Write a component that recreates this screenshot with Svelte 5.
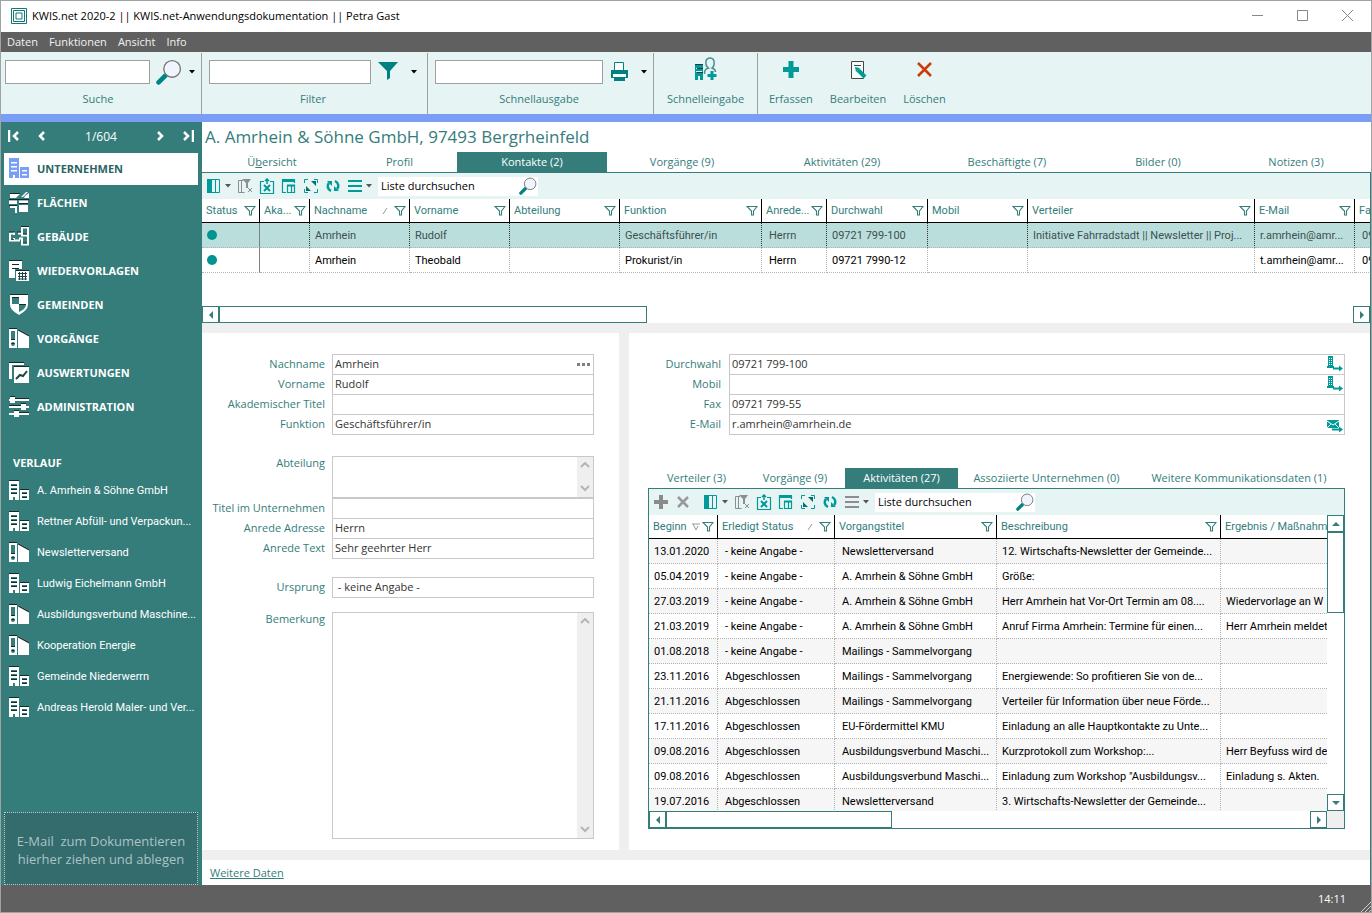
<script lang="ts">
  type Column = { label: string; width: number; filter?: boolean; sort?: 'asc' | 'desc'; inset?: boolean };

  const menu = ['Daten', 'Funktionen', 'Ansicht', 'Info'];

  const navigation = [
    { label: 'Unternehmen', icon: 'company', active: true },
    { label: 'Flächen', icon: 'areas' },
    { label: 'Gebäude', icon: 'building' },
    { label: 'Wiedervorlagen', icon: 'reminder' },
    { label: 'Gemeinden', icon: 'shield' },
    { label: 'Vorgänge', icon: 'folder' },
    { label: 'Auswertungen', icon: 'report' },
    { label: 'Administration', icon: 'sliders' }
  ];

  const history = [
    { label: 'A. Amrhein & Söhne GmbH', icon: 'company' },
    { label: 'Rettner Abfüll- und Verpackun...', icon: 'company' },
    { label: 'Newsletterversand', icon: 'folder' },
    { label: 'Ludwig Eichelmann GmbH', icon: 'company' },
    { label: 'Ausbildungsverbund Maschine...', icon: 'folder' },
    { label: 'Kooperation Energie', icon: 'folder' },
    { label: 'Gemeinde Niederwerrn', icon: 'company' },
    { label: 'Andreas Herold Maler- und Ver...', icon: 'company' }
  ];

  const tabs = ['Übersicht', 'Profil', 'Kontakte (2)', 'Vorgänge (9)', 'Aktivitäten (29)', 'Beschäftigte (7)', 'Bilder (0)', 'Notizen (3)'];
  const subTabs = ['Verteiler (3)', 'Vorgänge (9)', 'Aktivitäten (27)', 'Assoziierte Unternehmen (0)', 'Weitere Kommunikationsdaten (1)'];

  const contactColumns: Column[] = [
    { label: 'Status', width: 58, filter: true },
    { label: 'Aka...', width: 50, filter: true },
    { label: 'Nachname', width: 100, filter: true, sort: 'asc' },
    { label: 'Vorname', width: 100, filter: true },
    { label: 'Abteilung', width: 110, filter: true },
    { label: 'Funktion', width: 142, filter: true },
    { label: 'Anrede...', width: 65, filter: true, inset: true },
    { label: 'Durchwahl', width: 101, filter: true },
    { label: 'Mobil', width: 100, filter: true },
    { label: 'Verteiler', width: 227, filter: true },
    { label: 'E-Mail', width: 100, filter: true },
    { label: 'Fax', width: 100, filter: true, inset: true }
  ];

  const contacts = [
    ['', '', 'Amrhein', 'Rudolf', '', 'Geschäftsführer/in', 'Herrn', '09721 799-100', '', 'Initiative Fahrradstadt || Newsletter || Proj...', 'r.amrhein@amr...', '09721 799-55'],
    ['', '', 'Amrhein', 'Theobald', '', 'Prokurist/in', 'Herrn', '09721 7990-12', '', '', 't.amrhein@amr...', '09721 799-55']
  ];

  const activityColumns: Column[] = [
    { label: 'Beginn', width: 69, filter: true, sort: 'desc' },
    { label: 'Erledigt Status', width: 117, filter: true, sort: 'asc', inset: true },
    { label: 'Vorgangstitel', width: 162, filter: true, inset: true },
    { label: 'Beschreibung', width: 224, filter: true },
    { label: 'Ergebnis / Maßnahme', width: 160 }
  ];

  const activities = [
    ['13.01.2020', '- keine Angabe -', 'Newsletterversand', '12. Wirtschafts-Newsletter der Gemeinde...', ''],
    ['05.04.2019', '- keine Angabe -', 'A. Amrhein & Söhne GmbH', 'Größe:', ''],
    ['27.03.2019', '- keine Angabe -', 'A. Amrhein & Söhne GmbH', 'Herr Amrhein hat Vor-Ort Termin am 08....', 'Wiedervorlage an W'],
    ['21.03.2019', '- keine Angabe -', 'A. Amrhein & Söhne GmbH', 'Anruf Firma Amrhein: Termine für einen...', 'Herr Amrhein meldet'],
    ['01.08.2018', '- keine Angabe -', 'Mailings - Sammelvorgang', '', ''],
    ['23.11.2016', 'Abgeschlossen', 'Mailings - Sammelvorgang', 'Energiewende: So profitieren Sie von de...', ''],
    ['21.11.2016', 'Abgeschlossen', 'Mailings - Sammelvorgang', 'Verteiler für Information über neue Förde...', ''],
    ['17.11.2016', 'Abgeschlossen', 'EU-Fördermittel KMU', 'Einladung an alle Hauptkontakte zu Unte...', ''],
    ['09.08.2016', 'Abgeschlossen', 'Ausbildungsverbund Maschi...', 'Kurzprotokoll zum Workshop:...', 'Herr Beyfuss wird de'],
    ['09.08.2016', 'Abgeschlossen', 'Ausbildungsverbund Maschi...', 'Einladung zum Workshop "Ausbildungsv...', 'Einladung s. Akten.'],
    ['19.07.2016', 'Abgeschlossen', 'Newsletterversand', '3. Wirtschafts-Newsletter der Gemeinde...', '']
  ];

  const totalWidth = (columns: Column[]) => columns.reduce((sum, c) => sum + c.width, 0);
</script>

{#snippet lens(size: number)}
  <svg width={size} height={size} viewBox="0 0 25 25" aria-hidden="true">
    <path d="M2.500 22.500L9 16" stroke="#008484" stroke-width="4.500" stroke-linecap="round" />
    <circle cx="15.500" cy="9.500" r="8" fill="#f0f5fd" stroke="#777" stroke-width="1.300" />
  </svg>
{/snippet}

{#snippet caret()}
  <svg class="caret" width="6" height="4" viewBox="0 0 6 4" aria-hidden="true"><path d="M0 0h6L3 3.500z" /></svg>
{/snippet}

{#snippet navIcon(name: string)}
  <svg width="20" height="21" viewBox="0 0 20 21" fill="currentColor" aria-hidden="true">
    {#if name === 'company'}
      <path fill-rule="evenodd" d="M0 0h10v20H6v-3H4v3H0zM2 4v1.500h6V4zM2 8v1.500h6V8zM2 12v1.500h6V12zM11 9h9v11h-9zM13 12v1.500h5V12zM13 16v1.500h5V16z" />
      <path class="shade" d="M0 0h10v1H0zM11 9h9v1h-9zM2 5h6v1H2zM2 9h6v1H2zM2 13h6v1H2zM13 13h5v1h-5zM13 17h5v1h-5z" />
    {:else if name === 'areas'}
      <path d="M1 2h10l-4 4H1zM0 8h8v4H0zM1 14h7v7H6v-5H1zM10 7h9v4h-9zM10 13h9v7h-9zM12 5l5-5h2l-5 5zM16 4l4-3v5h-5z" />
      <path d="M9 7v14M0 8h20" stroke="#347d7b" stroke-width="1" />
      <path class="shade" d="M1 1h10v1H1zM0 7h20v1H0zM0 13h8v1H0zM10 11h9v1h-9z" />
    {:else if name === 'building'}
      <path d="M5 7.500H1v7h10M9 7.500h4M13 13.500v5h6v-17h-6v8h6M5 6v3M5 12v3M10 12.500h4" fill="none" stroke="currentColor" stroke-width="2" />
      <path class="shade" d="M12 0h8v1h-8zM0 5.500h6v1H0zM8 5.500h4v1H8zM14 7.500h4v1h-4zM14 16.500h4v1h-4zM2 13h3v.8H2z" />
    {:else if name === 'reminder'}
      <path fill-rule="evenodd" d="M0 0h13v9H6v9H0zM3 4v1h7V4zM3 8v1h7V8zM7 10h13v11H7z" />
      <path d="M9 13.500h9M9 16.500h9M9 19h9M10.500 12v8M13.500 12v8M16.500 12v8" stroke="#1d4443" stroke-width="1" />
      <path class="shade" d="M0 0h13v1H0zM3 4h7v1H3zM3 8h7v1H3zM7 10h13v1H7z" />
    {:else if name === 'shield'}
      <path d="M1 1h18v9c0 5-4 8-9 11C5 18 1 15 1 10z" />
      <path fill="#347d7b" d="M3 4h7v6h7c0 4-3 6-7 8v-8H3z" />
      <path class="shade" d="M1 0h18v1H1zM3 3h7v1H3zM10 10h7v1h-7z" />
    {:else if name === 'folder'}
      <path fill-rule="evenodd" d="M0 0h8v20H0zM2 3v9h4V3zM4 14a2 2 0 1 0 0 4a2 2 0 0 0 0-4zM9 1l11 6v13H9z" />
      <path class="shade" d="M0 0h8v1H0zM9 1l11 6v1.500L9 2.500zM2 11h4v1H2zM2.500 15h3v1h-3z" />
    {:else if name === 'report'}
      <path d="M0 0h15v3H3v14H0z" />
      <path d="M5 5h15v16H5z" />
      <path d="M7 17l4-4 3 1 4-5" fill="none" stroke="#1d4443" stroke-width="2" />
      <path class="shade" d="M0 0h15v1H0zM5 4h15v1H5z" />
    {:else if name === 'sliders'}
      <path d="M0 3h20v2H0zM0 10h20v2H0zM0 17h20v2H0zM1 1h5v6H1zM12 8h5v6h-5zM5 15h5v6H5z" />
      <path class="shade" d="M1 0h5v1H1zM6 2h14v1H6zM0 9h12v1H0zM12 7h5v1h-5zM5 14h5v1H5zM10 16h10v1H10z" />
    {/if}
  </svg>
{/snippet}

{#snippet funnel()}
  <svg width="12" height="10" viewBox="0 0 12 10" aria-hidden="true">
    <path d="M1 .5h10L7.500 5v4h-2V5z" fill="none" stroke="#347d7b" stroke-width="1.100" />
  </svg>
{/snippet}

{#snippet gridToolbar(id: string, editable: boolean)}
  <div class="grid-toolbar">
    {#if editable}
      <button aria-label="Hinzufügen" class="edit"><svg width="16" height="16" viewBox="0 0 16 16"><path d="M8 1v14M1 8h14" stroke="#8a8a8a" stroke-width="4" /></svg></button>
      <button aria-label="Entfernen" class="edit last"><svg width="16" height="16" viewBox="0 0 16 16"><path d="M3 3l10 10M13 3L3 13" stroke="#999" stroke-width="2.500" /></svg></button>
    {/if}
    <button class="split" aria-label="Spalten">
      <svg width="16" height="16" viewBox="0 0 16 16"><path d="M1.500 1.500h12v13h-12zM9.500 2v12" fill="#e6f4f4" stroke="#009a98" /><path d="M1 1h5v14H1z" fill="#009a98" /></svg>
      {@render caret()}
    </button>
    <button aria-label="Filter entfernen">
      <svg width="16" height="16" viewBox="0 0 16 16" fill="none" stroke="#8d8d8d"><path d="M6 2.500H1.500v12h6M4.500 3v11" /><path d="M5 1h9l-3 4v5H9V5z" fill="#8d8d8d" stroke="none" /><path d="M11 10l4 4M15 10l-4 4" /></svg>
    </button>
    <button aria-label="Excel-Export">
      <svg width="16" height="16" viewBox="0 0 16 16" fill="none" stroke="#009a98"><path d="M5 3.500H1.500v12h13v-12H11" stroke-width="1.200" /><path d="M8 1v5M6 3l2-2 2 2" stroke-width="1.500" /><path d="M5 7l6 6M11 7l-6 6" stroke-width="2" /></svg>
    </button>
    <button aria-label="Layout">
      <svg width="16" height="16" viewBox="0 0 16 16" fill="none" stroke="#009a98"><path d="M5 14.500H1.500v-13h12V5M6.500 7.500h7v7h-7zM10.500 8v6" stroke-width="1.200" /><path d="M1 3h13M6 7.500h8" stroke-width="2" /></svg>
    </button>
    <button aria-label="Vollbild">
      <svg width="16" height="16" viewBox="0 0 16 16"><path d="M1.500 5V1.500H5M11 1.500h3.500V5M14.500 11v3.500H11M5 14.500H1.500V11" fill="none" stroke="#009a98" /><path d="M8 3h5v5zM3 8v5h5z" fill="#00706e" /></svg>
    </button>
    <button aria-label="Aktualisieren">
      <svg width="16" height="16" viewBox="0 0 16 16"><path d="M6 13C2 11 2 7 4 5M10 3c4 2 4 6 2 8" fill="none" stroke="#009a98" stroke-width="2.500" /><path d="M2 3h5v5zM14 13H9V8z" fill="#009a98" /></svg>
    </button>
    <button class="split" aria-label="Menü">
      <svg width="16" height="16" viewBox="0 0 16 16"><path d="M1 3h14M1 8h14M1 13h14" stroke={editable ? '#8d8d8d' : '#009a98'} stroke-width="2" /></svg>
      {@render caret()}
    </button>
    <div class="grid-search">
      <input {id} aria-label="Liste durchsuchen" placeholder="Liste durchsuchen" />
      {@render lens(18)}
    </div>
  </div>
{/snippet}

{#snippet dataTable(columns: Column[], rows: string[][], kind: string)}
  <table class={kind} style:width="{totalWidth(columns)}px">
    <colgroup>
      {#each columns as column}
        <col style:width="{column.width}px" />
      {/each}
    </colgroup>
    <thead>
      <tr>
        {#each columns as column}
          <th>
            <div class="head">
              <span>{column.label}</span>
              {#if column.sort === 'asc'}
                <svg class="sort" width="6" height="8" viewBox="0 0 6 8" aria-hidden="true"><path d="M1 7l4-6" stroke="#999" /></svg>
              {:else if column.sort === 'desc'}
                <svg width="8" height="8" viewBox="0 0 8 8" aria-hidden="true"><path d="M0 1h8M1 1l3 6 2-4" fill="none" stroke="#999" /></svg>
              {/if}
              {#if column.filter}{@render funnel()}{/if}
            </div>
          </th>
        {/each}
      </tr>
    </thead>
    <tbody>
      {#each rows as row, r}
        <tr class:selected={kind === 'contacts' && r === 0}>
          {#each row as cell, c}
            <td class:inset={columns[c].inset}>
              {#if kind === 'contacts' && c === 0}<i class="dot"></i>{:else}{cell}{/if}
            </td>
          {/each}
        </tr>
      {/each}
    </tbody>
  </table>
{/snippet}

{#snippet arrow(direction: string)}
  <button class="arrow {direction}" aria-label="Blättern"><svg width="8" height="8" viewBox="0 0 8 8"><path d="M6 0v8L2 4z" /></svg></button>
{/snippet}

{#snippet fieldScroll()}
  <div class="field-scroll" aria-hidden="true">
    <svg width="10" height="7" viewBox="0 0 10 7"><path d="M1 5l4-4 4 4" /></svg>
    <svg width="10" height="7" viewBox="0 0 10 7"><path d="M1 1l4 4 4-4" /></svg>
  </div>
{/snippet}

{#snippet phoneIcon()}
  <svg width="16" height="17" viewBox="0 0 16 17" aria-hidden="true">
    <path d="M1 0h5v10h1v2H0v-2h1z" fill="#009a98" /><path d="M2.500 2v7M4.500 2v7" stroke="#fff" stroke-dasharray="1 1" />
    <path d="M6 12.500h6" stroke="#009a98" stroke-width="2" /><path d="M12 9.500l4 3-4 3z" fill="#009a98" />
  </svg>
{/snippet}

<div class="window">
  <header class="titlebar">
    <svg width="16" height="16" viewBox="0 0 16 16" fill="#fff" stroke="#107878" aria-hidden="true">
      <path d="M.5.5h15v15H.5zM2.500 2.500h11v11h-11zM5 5h6v6H5z" />
    </svg>
    <h1>KWIS.net 2020-2 || KWIS.net-Anwendungsdokumentation || Petra Gast</h1>
    <div class="controls">
      <button aria-label="Minimieren"><svg width="11" height="11"><path d="M0 5.500h11" /></svg></button>
      <button aria-label="Maximieren"><svg width="11" height="11"><path d="M.5.5h10v10H.5z" /></svg></button>
      <button aria-label="Schließen"><svg width="11" height="11"><path d="M0 0l11 11M11 0L0 11" /></svg></button>
    </div>
  </header>

  <nav class="menubar">
    {#each menu as item}<button>{item}</button>{/each}
  </nav>

  <div class="ribbon">
    <div class="group search">
      <div class="tools">
        <input id="suche" />
        <button class="split" aria-label="Suchen">{@render lens(26)}{@render caret()}</button>
      </div>
      <label for="suche">Suche</label>
    </div>
    <div class="group filter">
      <div class="tools">
        <input id="filter" />
        <button class="split wide" aria-label="Filtern">
          <svg width="22" height="22" viewBox="0 0 22 22"><path d="M1 1h20l-8 9v7l-3 2v-9z" fill="#008080" /></svg>
          {@render caret()}
        </button>
      </div>
      <label for="filter">Filter</label>
    </div>
    <div class="group output">
      <div class="tools">
        <input id="ausgabe" />
        <button class="split wide" aria-label="Drucken">
          <svg width="20" height="22" viewBox="0 0 20 22"><path d="M5.500 9V1.500h9V9" fill="#fff" stroke="#008080" /><path d="M2 9h17v8H2z" fill="#008080" /><path d="M4 13h13v3H4z" fill="#fff" /><path d="M5 17h11v3H5z" fill="#008080" /></svg>
          {@render caret()}
        </button>
      </div>
      <label for="ausgabe">Schnellausgabe</label>
    </div>
    <div class="group entry">
      <button class="action">
        <svg width="24" height="26" viewBox="0 0 24 26"><path fill-rule="evenodd" d="M1 8h8v16H6v-4H4v4H1zM2 12v1h6v-1zM2 15v1h6v-1z" fill="#009a98" /><path d="M1 8.500h8M3 12.500h6M3 16.500h6" stroke="#1d3d3d" /><path d="M10.500 18c0-4 1-5 4-6-3-2-3-4-2.500-7 1-4 7-4 8 0 .5 3 .5 5-2 7 3 1 3.500 2 3.500 4" fill="none" stroke="#479090" stroke-width="1.500" /><path d="M18 15v9M13.500 19.500h9" stroke="#009a98" stroke-width="3" /></svg>
        Schnelleingabe
      </button>
    </div>
    <div class="group actions">
      <button class="action">
        <svg width="24" height="26" viewBox="0 0 24 26"><path d="M12 5v17M4 13.500h16" stroke="#009a98" stroke-width="5" /></svg>
        Erfassen
      </button>
      <button class="action">
        <svg width="24" height="26" viewBox="0 0 24 26"><path d="M5.500 5.500h12v17h-12z" fill="#f5fbfb" stroke="#444" /><path d="M8 9.500h7" stroke="#444" /><path d="M12 14l7 7" stroke="#009a98" stroke-width="4" /><path d="M9 11l5 1-4 4z" fill="#009a98" /></svg>
        Bearbeiten
      </button>
      <button class="action">
        <svg width="24" height="26" viewBox="0 0 24 26"><path d="M5 7l13 13M18 7L5 20" stroke="#cc3a0a" stroke-width="2.500" /></svg>
        Löschen
      </button>
    </div>
  </div>

  <div class="body">
    <aside class="sidebar">
      <div class="pager">
        <button aria-label="Erster"><svg width="12" height="12" viewBox="0 0 12 12"><path d="M1 0v12M10 2L6 6l4 4" /></svg></button>
        <button aria-label="Zurück"><svg width="12" height="12" viewBox="0 0 12 12"><path d="M8 2L4 6l4 4" /></svg></button>
        <span>1/604</span>
        <button aria-label="Weiter"><svg width="12" height="12" viewBox="0 0 12 12"><path d="M4 2l4 4-4 4" /></svg></button>
        <button aria-label="Letzter"><svg width="12" height="12" viewBox="0 0 12 12"><path d="M2 2l4 4-4 4M11 0v12" /></svg></button>
      </div>
      <nav class="modules">
        {#each navigation as item}
          <button class:active={item.active}>{@render navIcon(item.icon)}{item.label}</button>
        {/each}
      </nav>
      <h2>Verlauf</h2>
      <nav class="history">
        {#each history as item}
          <button>{@render navIcon(item.icon)}{item.label}</button>
        {/each}
      </nav>
      <div class="dropzone">E-Mail&nbsp; zum Dokumentieren<br />hierher ziehen und ablegen</div>
    </aside>

    <main>
      <h2 class="record">A. Amrhein &amp; Söhne GmbH, 97493 Bergrheinfeld</h2>
      <div class="tabs main-tabs">
        {#each tabs as tab, i}
          <button class:active={i === 2}>
            {#if i === 0}<span>Ü<u>b</u>ersicht</span>{:else}{tab}{/if}
          </button>
        {/each}
      </div>

      <div class="page">
        {@render gridToolbar('kontakte-suche', false)}
        <div class="contact-grid">{@render dataTable(contactColumns, contacts, 'contacts')}</div>
        <div class="hscroll main-scroll">
          {@render arrow('left')}
          <div class="thumb"></div>
          {@render arrow('right')}
        </div>

        <div class="panels">
          <section class="panel person">
            <div class="fields">
              <div class="field"><label for="nachname">Nachname</label><input id="nachname" value="Amrhein" /><button class="more" aria-label="Mehr"><i></i><i></i><i></i></button></div>
              <div class="field"><label for="vorname">Vorname</label><input id="vorname" value="Rudolf" /></div>
              <div class="field"><label for="titel">Akademischer Titel</label><input id="titel" /></div>
              <div class="field"><label for="funktion">Funktion</label><input id="funktion" value="Geschäftsführer/in" /></div>
            </div>
            <div class="fields">
              <div class="field area"><label for="abteilung">Abteilung</label><textarea id="abteilung"></textarea>{@render fieldScroll()}</div>
              <div class="field"><label for="utitel">Titel im Unternehmen</label><input id="utitel" /></div>
              <div class="field"><label for="anrede">Anrede Adresse</label><input id="anrede" value="Herrn" /></div>
              <div class="field"><label for="anredetext">Anrede Text</label><input id="anredetext" value="Sehr geehrter Herr" /></div>
            </div>
            <div class="fields">
              <div class="field"><label for="ursprung">Ursprung</label><input id="ursprung" value=" - keine Angabe -" /></div>
            </div>
            <div class="field area notes"><label for="bemerkung">Bemerkung</label><textarea id="bemerkung"></textarea>{@render fieldScroll()}</div>
          </section>

          <section class="panel details">
            <div class="fields">
              <div class="field"><label for="durchwahl">Durchwahl</label><input id="durchwahl" value="09721 799-100" /><button class="call" aria-label="Anrufen">{@render phoneIcon()}</button></div>
              <div class="field"><label for="mobil">Mobil</label><input id="mobil" /><button class="call" aria-label="Mobil anrufen">{@render phoneIcon()}</button></div>
              <div class="field"><label for="fax">Fax</label><input id="fax" value="09721 799-55" /></div>
              <div class="field"><label for="email">E-Mail</label><input id="email" value="r.amrhein@amrhein.de" />
                <button class="call" aria-label="E-Mail schreiben">
                  <svg width="16" height="17" viewBox="0 0 16 17"><path d="M0 4h12v8H0z" fill="#009a98" /><path d="M0 5l6 4 6-4M0 12l4-4M12 12L8 8" fill="none" stroke="#fff" /><path d="M5 13.500h7" stroke="#009a98" stroke-width="2" /><path d="M12 10.500l4 3-4 3z" fill="#009a98" /></svg>
                </button>
              </div>
            </div>

            <div class="tabs sub-tabs">
              {#each subTabs as tab, i}<button class:active={i === 2}>{tab}</button>{/each}
            </div>
            <div class="subgrid">
              {@render gridToolbar('aktivitaeten-suche', true)}
              <div class="rows">
                <div class="clip">{@render dataTable(activityColumns, activities, 'activities')}</div>
                <div class="vscroll">
                  {@render arrow('up')}
                  <div class="thumb"></div>
                  {@render arrow('down')}
                </div>
              </div>
              <div class="bottom">
                <div class="hscroll">
                  {@render arrow('left')}
                  <div class="thumb"></div>
                  {@render arrow('right')}
                </div>
              </div>
            </div>
          </section>
        </div>

        <footer><a href="#weitere">Weitere Daten</a></footer>
      </div>
    </main>
  </div>

  <div class="statusbar">
    <span>14:11</span>
    <svg width="10" height="10" viewBox="0 0 10 10" aria-hidden="true"><path d="M0 10L10 0M4 10l6-6M8 10l2-2" stroke="#ccc" /></svg>
  </div>
</div>

<style>
  :global(body) {
    margin: 0;
  }

  .window,
  .window * {
    box-sizing: border-box;
  }

  .window {
    display: flex;
    flex-direction: column;
    height: 100vh;
    border: 1px solid #a0a3a3;
    background: #fff;
    color: #347d7b;
    font-family: 'Open Sans', 'Noto Sans', sans-serif;
    font-size: 11px;
    overflow: hidden;
  }

  button,
  input,
  textarea {
    font: inherit;
    color: inherit;
    border: 0;
    padding: 0;
    margin: 0;
    background: none;
    border-radius: 0;
    outline: none;
  }

  svg {
    display: block;
    flex: none;
  }

  h1,
  h2 {
    margin: 0;
    font-weight: 400;
  }

  .titlebar {
    display: flex;
    align-items: center;
    flex: none;
    height: 31px;
    padding: 0 18px 2px 10px;
    color: #000;
  }

  h1 {
    margin-left: 5px;
    font-size: 11px;
  }

  .controls {
    display: flex;
    gap: 34px;
    margin-left: auto;
  }

  .controls path {
    fill: none;
    stroke: #888;
  }

  .menubar {
    display: flex;
    flex: none;
    gap: 11px;
    height: 20px;
    padding: 0 0 2px 6px;
    background: #606060;
    color: #f2f2f2;
  }

  .ribbon {
    display: flex;
    flex: none;
    height: 70px;
    padding-top: 1px;
    border-bottom: 8px solid #7a9df6;
    background: #e6f4f4;
  }

  .group {
    display: flex;
    flex-direction: column;
    flex: none;
    padding: 7px 6px 0 7px;
    border-right: 1px solid #a0a0a0;
    text-align: center;
  }

  .group.search {
    width: 201px;
    padding-left: 4px;
  }

  .group.filter,
  .group.output {
    width: 226px;
  }

  .group.entry {
    width: 104px;
    padding: 3px 0 0;
  }

  .group.actions {
    flex-direction: row;
    gap: 17px;
    padding: 3px 0 0 11px;
    border-right: 0;
  }

  .tools {
    display: flex;
    gap: 6px;
  }

  .tools input {
    flex: 1;
    min-width: 0;
    height: 24px;
    padding: 0 4px;
    border: 1px solid #a0a0a0;
    background: #fff;
  }

  .tools .split {
    display: flex;
    align-items: center;
    gap: 7px;
    height: 24px;
  }

  .tools .wide {
    gap: 12px;
    margin-right: 4px;
  }

  .output .wide {
    margin-right: 0;
  }

  .ribbon label {
    margin-top: 6px;
    padding-right: 4px;
    line-height: 18px;
  }

  .action {
    display: flex;
    flex-direction: column;
    align-items: center;
    justify-content: flex-start;
    gap: 8px;
    line-height: 18px;
  }

  .body {
    display: flex;
    flex: 1;
    min-height: 0;
  }

  .sidebar {
    display: flex;
    flex-direction: column;
    flex: none;
    width: 201px;
    padding: 0 4px 0 3px;
    background: #347d7b;
    color: #fff;
  }

  .pager {
    display: flex;
    align-items: center;
    height: 28px;
    padding: 0 4px 0 4px;
    gap: 16px;
    font-size: 12px;
  }

  .pager span {
    flex: 1;
    text-align: center;
  }

  .pager path {
    fill: none;
    stroke: #fff;
    stroke-width: 2.500;
  }

  .modules {
    display: flex;
    flex-direction: column;
    gap: 2px;
    margin-top: 3px;
  }

  .modules button,
  .history button {
    display: flex;
    align-items: center;
    gap: 8px;
    padding-left: 5px;
    white-space: nowrap;
  }

  .modules button {
    height: 32px;
    padding-bottom: 1px;
    font-size: 11px;
    font-weight: 700;
    text-transform: uppercase;
  }

  .modules .active {
    background: #fff;
    color: #2a6462;
  }

  .modules .active svg {
    color: #7a9df6;
  }

  .shade {
    fill: #152a2a;
  }

  .active .shade {
    fill: none;
  }

  .sidebar h2 {
    margin-top: 30px;
    padding-left: 9px;
    font-size: 11px;
    font-weight: 700;
    line-height: 20px;
    text-transform: uppercase;
  }

  .history {
    margin-top: 2px;
    font-family: Roboto, 'Open Sans', sans-serif;
  }

  .history button {
    height: 31px;
  }

  .dropzone {
    margin-top: auto;
    height: 73px;
    padding-top: 19px;
    border: 1px dotted #b5cccc;
    background: #346b6d;
    color: #a9c4c5;
    font-size: 13px;
    line-height: 18px;
    text-align: center;
    white-space: nowrap;
  }

  main {
    display: flex;
    flex-direction: column;
    flex: 1;
    min-width: 0;
  }

  .record {
    height: 30px;
    padding-left: 3px;
    font-size: 17px;
    line-height: 30px;
  }

  .tabs {
    display: grid;
    flex: none;
    height: 20px;
  }

  .main-tabs {
    grid-template-columns: 140fr 115fr 150fr 150fr 170fr 160fr 142fr 134fr 8fr;
  }

  .tabs button {
    padding-bottom: 2px;
  }

  .tabs .active {
    background: #347d7b;
    color: #fff;
  }

  .page {
    display: flex;
    flex-direction: column;
    flex: 1;
    min-height: 0;
    border-top: 1px solid #347d7b;
    border-right: 1px solid #347d7b;
  }

  .grid-toolbar {
    display: flex;
    align-items: center;
    flex: none;
    gap: 6px;
    height: 26px;
    padding-left: 4px;
    background: #e6f4f4;
  }

  .grid-toolbar .split {
    display: flex;
    align-items: center;
    gap: 3px;
  }

  .grid-toolbar .caret {
    fill: #555;
  }

  .grid-toolbar .last {
    margin-right: 6px;
  }

  .grid-search {
    display: flex;
    align-items: center;
    width: 160px;
    height: 19px;
    padding: 0 1px 0 3px;
    background: #fff;
    color: #000;
  }

  .grid-search input {
    flex: 1;
    min-width: 0;
    padding-bottom: 2px;
  }

  .grid-search input::placeholder {
    color: #000;
    opacity: 1;
  }

  .contact-grid {
    flex: none;
    height: 107px;
    overflow: hidden;
  }

  table {
    table-layout: fixed;
    border-collapse: separate;
    border-spacing: 0;
    font-family: Roboto, 'Liberation Sans', sans-serif;
    font-size: 11px;
  }

  th {
    height: 24px;
    padding: 0 3px 0 4px;
    border-right: 1px solid #000;
    border-bottom: 1px solid #000;
    color: #347d7b;
    font-weight: 400;
    text-align: left;
  }

  .head {
    display: flex;
    align-items: center;
    gap: 2px;
    white-space: nowrap;
  }

  .head span {
    flex: 1;
    min-width: 0;
    overflow: hidden;
  }

  .sort {
    margin-right: 4px;
  }

  td {
    height: 25px;
    padding: 0 0 0 5px;
    border-right: 1px dotted #b4b4b4;
    border-bottom: 1px dotted #b4b4b4;
    color: #000;
    white-space: nowrap;
    overflow: hidden;
  }

  td.inset {
    padding-left: 7px;
  }

  .contacts td:first-child {
    border-right: 1px solid #808080;
  }

  .selected td {
    background: #badedc;
    border-right-color: #333;
    color: #3f4f4f;
  }

  .activities tbody tr:nth-child(odd) td {
    background: #f6f6f6;
  }

  .dot {
    display: block;
    width: 10px;
    height: 10px;
    border-radius: 50%;
    background: #009490;
  }

  .hscroll {
    display: flex;
    flex: 1;
    height: 17px;
  }

  .main-scroll {
    flex: none;
  }

  .arrow {
    display: flex;
    align-items: center;
    justify-content: center;
    flex: none;
    width: 17px;
    height: 17px;
    border: 1px solid #347d7b;
    background: #fff;
  }

  .arrow path {
    fill: #347d7b;
  }

  .arrow.right {
    margin-left: auto;
  }

  .arrow.right svg {
    transform: rotate(180deg);
  }

  .arrow.up svg {
    transform: rotate(90deg);
  }

  .arrow.down {
    margin-top: auto;
  }

  .arrow.down svg {
    transform: rotate(-90deg);
  }

  .thumb {
    border: 1px solid #347d7b;
    background: #fff;
  }

  .hscroll .thumb {
    width: 428px;
  }

  .panels {
    display: grid;
    grid-template-columns: minmax(0, 417fr) minmax(0, 741fr);
    gap: 10px;
    flex: 1;
    min-height: 0;
    border-top: 10px solid #efefef;
    border-bottom: 10px solid #efefef;
    background: #efefef;
  }

  .panel {
    display: flex;
    flex-direction: column;
    min-height: 0;
    padding: 21px 25px 11px 0;
    background: #fff;
  }

  .person .fields {
    margin-bottom: 22px;
  }

  .person .fields:nth-child(2) {
    margin-bottom: 19px;
  }

  .person .fields:nth-child(3) {
    margin-bottom: 15px;
  }

  .field {
    display: flex;
    position: relative;
    flex: none;
    height: 21px;
    margin-bottom: -1px;
  }

  .field label {
    flex: none;
    width: 123px;
    margin-right: 7px;
    line-height: 20px;
    text-align: right;
    white-space: nowrap;
  }

  .details .field label {
    width: 92px;
    margin-right: 8px;
  }

  .field input,
  .field textarea {
    flex: 1;
    min-width: 0;
    padding: 0 2px 2px;
    border: 1px solid #c8c8c8;
    background: #fff;
    color: #333;
    resize: none;
  }

  .field.area {
    height: 42px;
    margin-bottom: 0;
  }

  .field.notes {
    flex: 1;
    min-height: 0;
  }

  .field.area label {
    line-height: 14px;
  }

  .field.area textarea {
    border-right: 0;
  }

  .field-scroll {
    display: flex;
    flex-direction: column;
    align-items: center;
    justify-content: space-between;
    width: 17px;
    padding: 5px 0;
    border: 1px solid #c8c8c8;
    border-left: 0;
    background: #efefef;
  }

  .field-scroll path {
    fill: none;
    stroke: #b5b5b5;
    stroke-width: 2;
  }

  .more,
  .call {
    display: flex;
    position: absolute;
    top: 2px;
    right: 2px;
  }

  .more {
    gap: 2px;
    top: 9px;
    right: 4px;
  }

  .more i {
    width: 3px;
    height: 3px;
    background: #808080;
  }

  .sub-tabs {
    grid-template-columns: 97fr 100fr 113fr 177fr 208fr 2fr;
    margin: 34px 0 0 19px;
  }

  .subgrid {
    display: flex;
    flex-direction: column;
    flex: 1;
    min-height: 0;
    margin: 0 0 10px 19px;
    border: 1px solid #347d7b;
  }

  .rows {
    display: flex;
    flex: 1;
    min-height: 0;
  }

  .clip {
    flex: 1;
    min-width: 0;
    overflow: hidden;
  }

  .vscroll {
    display: flex;
    flex-direction: column;
    width: 17px;
  }

  .vscroll .thumb {
    height: 81px;
  }

  .bottom {
    display: flex;
    flex: none;
    padding-right: 17px;
    background: #efefef;
  }

  .bottom .hscroll {
    background: #fff;
  }

  .bottom .hscroll .thumb {
    width: 226px;
  }

  footer {
    flex: none;
    height: 25px;
    padding-left: 8px;
    line-height: 25px;
  }

  footer a {
    color: inherit;
  }

  .statusbar {
    display: flex;
    align-items: center;
    justify-content: flex-end;
    flex: none;
    gap: 15px;
    height: 27px;
    background: #606060;
    color: #fff;
  }

  .statusbar svg {
    align-self: flex-end;
  }
</style>
